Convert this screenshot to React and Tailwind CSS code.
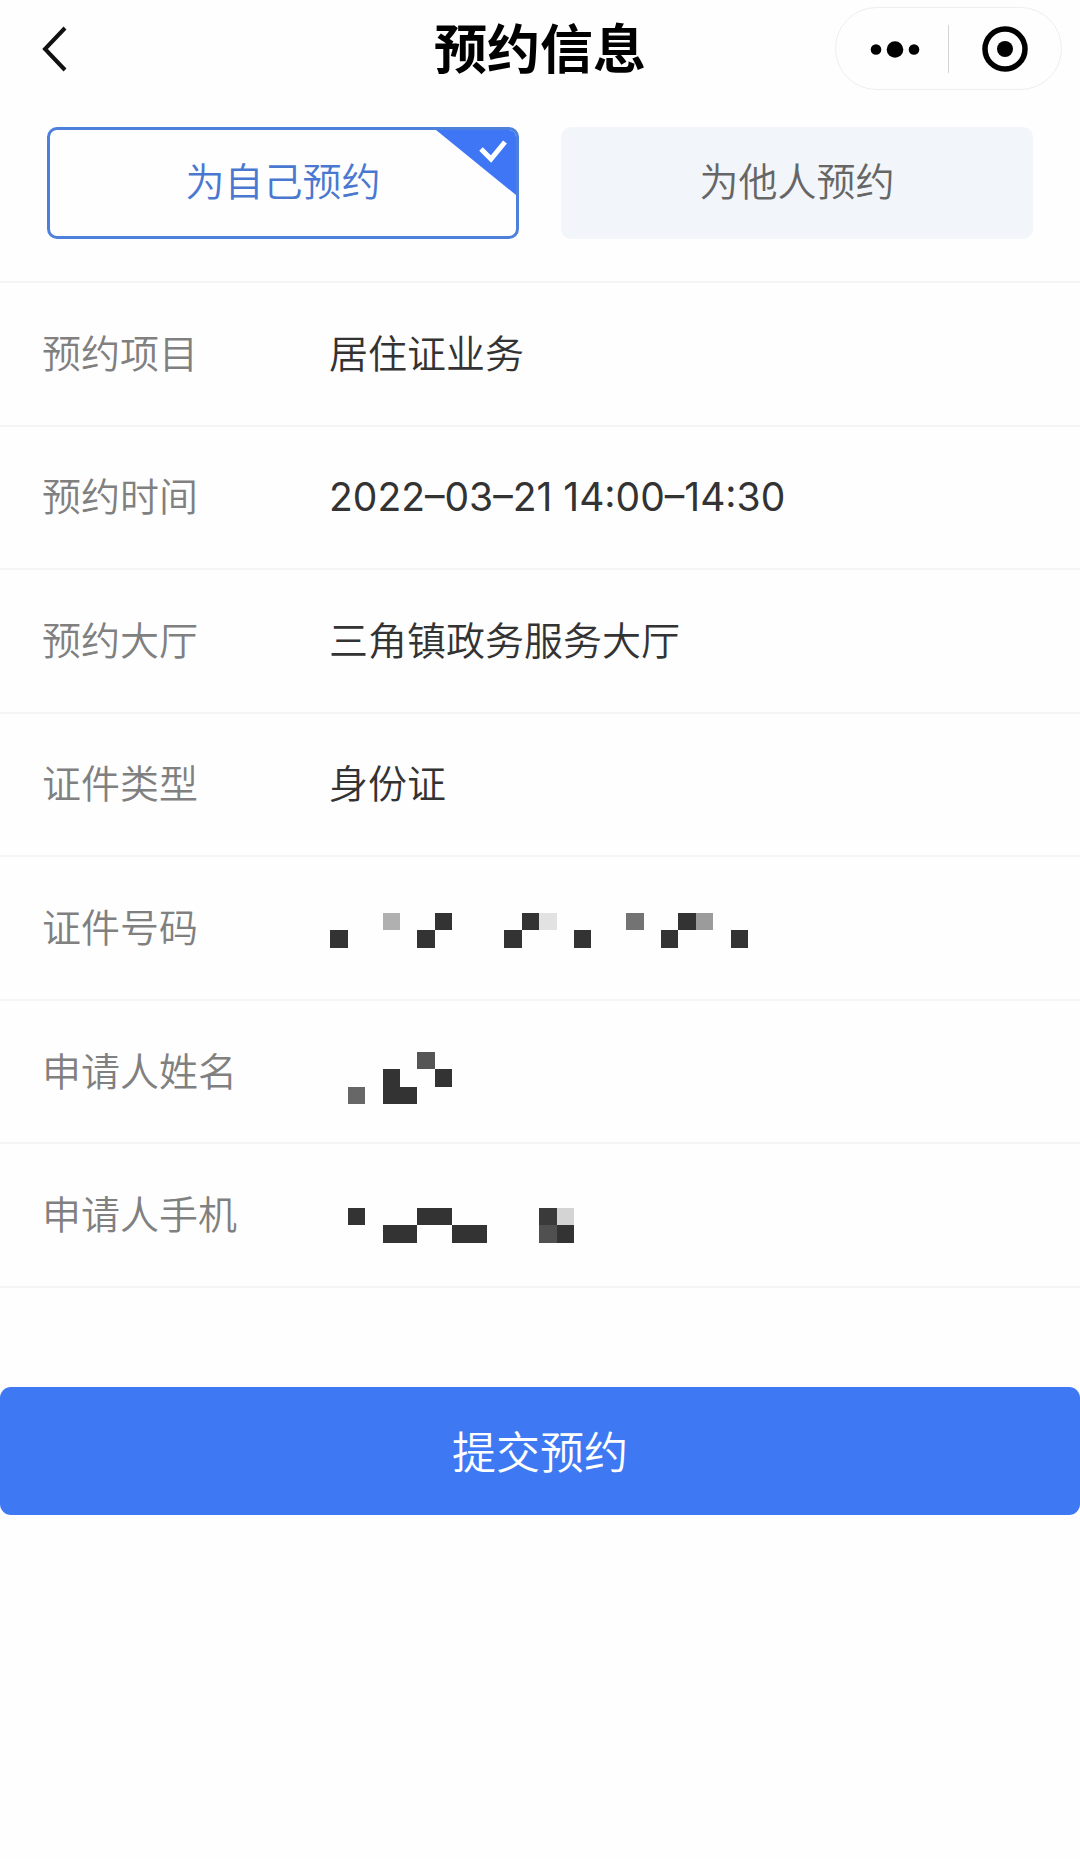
import React, { useState } from "react";

const CELL = 17.4;

// masked values: [column, row, color]
const ID_MASK = [
  [0, 1, "#333333"],
  [3, 0, "#b0b0b0"],
  [5, 1, "#333333"],
  [6, 0, "#333333"],
  [10, 1, "#333333"],
  [11, 0, "#333333"],
  [12, 0, "#e2e2e2"],
  [14, 1, "#333333"],
  [17, 0, "#737373"],
  [19, 1, "#333333"],
  [20, 0, "#333333"],
  [21, 0, "#9b9b9b"],
  [23, 1, "#333333"],
];

const NAME_MASK = [
  [1, 2, "#676767"],
  [3, 1, "#333333"],
  [3, 2, "#333333"],
  [4, 2, "#333333"],
  [5, 0, "#555555"],
  [6, 1, "#333333"],
];

const PHONE_MASK = [
  [1, 0, "#333333"],
  [3, 1, "#333333"],
  [4, 1, "#333333"],
  [5, 0, "#333333"],
  [6, 0, "#333333"],
  [7, 1, "#333333"],
  [8, 1, "#333333"],
  [12, 0, "#3a3a3a"],
  [13, 0, "#d4d4d4"],
  [12, 1, "#505050"],
  [13, 1, "#333333"],
];

const Mosaic = ({ cells, top, label }) => (
  <svg
    role="img"
    aria-label={label}
    viewBox="0 0 420 72"
    className="w-[420px] h-[72px]"
    shapeRendering="crispEdges"
  >
    {cells.map(([col, row, color]) => (
      <rect
        key={`${col}-${row}`}
        x={1.4 + col * CELL}
        y={top + row * CELL}
        width={CELL}
        height={CELL}
        fill={color}
      />
    ))}
  </svg>
);

const rows = [
  { label: "预约项目", value: "居住证业务" },
  { label: "预约时间", value: <time className="font-normal">2022–03–21 14:00–14:30</time> },
  { label: "预约大厅", value: "三角镇政务服务大厅" },
  { label: "证件类型", value: "身份证" },
  { label: "证件号码", value: <Mosaic cells={ID_MASK} top={21} label="证件号码" /> },
  { label: "申请人姓名", value: <Mosaic cells={NAME_MASK} top={16} label="申请人姓名" /> },
  { label: "申请人手机", value: <Mosaic cells={PHONE_MASK} top={29} label="申请人手机" /> },
];

const tabs = [
  { id: "self", text: "为自己预约" },
  { id: "other", text: "为他人预约" },
];

const Header = () => (
  <header className="grid grid-cols-[1fr_auto_1fr] items-center pt-[7px] px-[18px]">
    <button type="button" aria-label="返回" className="justify-self-start pl-[22px]">
      <svg viewBox="0 0 28 48" className="w-7 h-12" fill="none" stroke="#111111" strokeWidth="4">
        <path d="M25 3 L5 24 L25 45" />
      </svg>
    </button>

    <h1 className="pt-0.5 text-[53px] leading-[64px] font-bold text-black">预约信息</h1>

    {/* Capsule menu */}
    <div className="justify-self-end flex items-center w-[227px] h-[83px] rounded-full border border-[#eeeeee]">
      <button type="button" aria-label="更多" className="flex-1 flex justify-center">
        <svg viewBox="0 0 56 48" className="w-14 h-12">
          <circle cx="12" cy="24.5" r="5.3" />
          <circle cx="31" cy="24.5" r="8.3" />
          <circle cx="50" cy="24.5" r="5.3" />
        </svg>
      </button>
      <span className="w-px h-12 bg-[#d4d4d4]" />
      <button type="button" aria-label="关闭" className="flex-1 flex justify-center">
        <svg viewBox="0 0 48 48" className="size-12">
          <circle cx="24" cy="24" r="20" fill="none" stroke="black" strokeWidth="5.5" />
          <circle cx="24" cy="24" r="8" />
        </svg>
      </button>
    </div>
  </header>
);

const App = () => {
  const [active, setActive] = useState("self");

  return (
    <div className="min-h-screen bg-[#fefefe] font-[Inter,'Noto_Sans_CJK_SC',sans-serif]">
      <Header />

      {/* Who the booking is for */}
      <div className="grid grid-cols-2 gap-[42px] px-[47px] pt-[37px] pb-[42px] border-b-2 border-[#f4f4f4]">
        {tabs.map((tab) => {
          const selected = tab.id === active;
          return (
            <button
              key={tab.id}
              type="button"
              aria-pressed={selected}
              onClick={() => setActive(tab.id)}
              className={`relative overflow-hidden h-28 rounded-[10px] border-3 text-[39px] leading-[48px] font-[350] pb-0.5 ${
                selected
                  ? "border-[#4c80dc] text-[#4a78d0]"
                  : "border-[#f2f5fa] bg-[#f2f5fa] text-[#666666]"
              }`}
            >
              {tab.text}
              {selected && (
                <svg viewBox="0 0 80 65" className="absolute top-0 right-0 w-20 h-[65px]">
                  <path d="M0 0 H80 V65 Z" fill="#3e76f5" />
                  <path d="M45 19 L55 29 L69 12" fill="none" stroke="white" strokeWidth="5" />
                </svg>
              )}
            </button>
          );
        })}
      </div>

      {/* Booking details */}
      <dl className="grid auto-rows-fr min-h-[1005px] text-[39px] leading-[48px] font-[350]">
        {rows.map((row) => (
          <div key={row.label} className="flex items-center pl-[42px] border-b-2 border-[#f5f5f5]">
            <dt className="w-[287px] shrink-0 text-[#808080]">{row.label}</dt>
            <dd className="text-[#333333]">{row.value}</dd>
          </div>
        ))}
      </dl>

      <button
        type="button"
        className="mt-[99px] w-full h-32 rounded-[11px] bg-[#3e79f3] pt-1 text-[44px] leading-[56px] font-[350] text-white"
      >
        提交预约
      </button>
    </div>
  );
};

export default App;
